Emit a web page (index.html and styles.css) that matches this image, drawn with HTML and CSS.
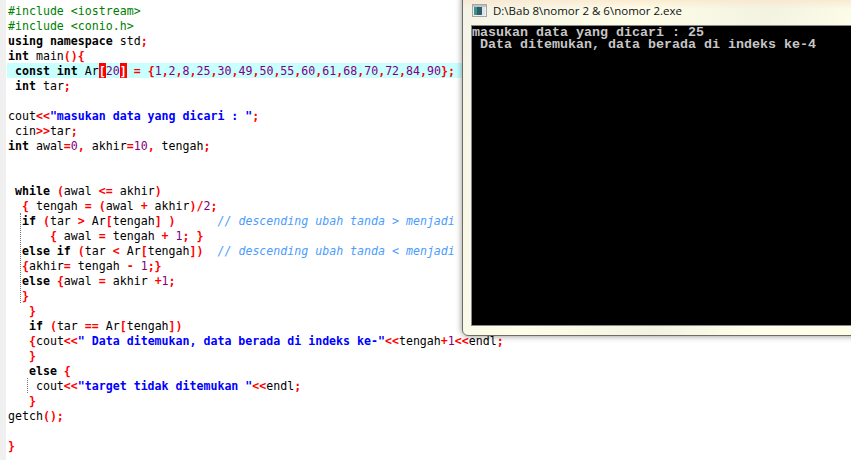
FILE: index.html
```html
<!DOCTYPE html>
<html>
<head>
<meta charset="utf-8">
<title>nomor 2</title>
<link rel="stylesheet" href="styles.css">
</head>
<body>
<main class="editor">
<div class="gutter"></div>
<pre class="code"><div class="ln"><span class="pp">#include &lt;iostream&gt;</span></div><div class="ln"><span class="pp">#include &lt;conio.h&gt;</span></div><div class="ln"><b>using namespace</b> std<i class="op">;</i></div><div class="ln"><b>int</b> main<i class="op">(){</i></div><div class="ln active"> <b>const int</b> Ar<i class="match">[</i><span class="num">20</span><i class="match">]</i> <i class="op">=</i> <i class="op">{</i><span class="num">1</span><i class="op">,</i><span class="num">2</span><i class="op">,</i><span class="num">8</span><i class="op">,</i><span class="num">25</span><i class="op">,</i><span class="num">30</span><i class="op">,</i><span class="num">49</span><i class="op">,</i><span class="num">50</span><i class="op">,</i><span class="num">55</span><i class="op">,</i><span class="num">60</span><i class="op">,</i><span class="num">61</span><i class="op">,</i><span class="num">68</span><i class="op">,</i><span class="num">70</span><i class="op">,</i><span class="num">72</span><i class="op">,</i><span class="num">84</span><i class="op">,</i><span class="num">90</span><i class="op">};</i></div><div class="ln"> <b>int</b> tar<i class="op">;</i></div><div class="ln"> </div><div class="ln">cout<i class="op">&lt;&lt;</i><span class="str">"masukan data yang dicari : "</span><i class="op">;</i></div><div class="ln"> cin<i class="op">&gt;&gt;</i>tar<i class="op">;</i></div><div class="ln"><b>int</b> awal<i class="op">=</i><span class="num">0</span><i class="op">,</i> akhir<i class="op">=</i><span class="num">10</span><i class="op">,</i> tengah<i class="op">;</i></div><div class="ln"> </div><div class="ln"> </div><div class="ln"> <b>while</b> <i class="op">(</i>awal <i class="op">&lt;=</i> akhir<i class="op">)</i></div><div class="ln">  <i class="op">{</i> tengah <i class="op">=</i> <i class="op">(</i>awal <i class="op">+</i> akhir<i class="op">)/</i><span class="num">2</span><i class="op">;</i></div><div class="guide guide-a"><div class="ln">  <b>if</b> <i class="op">(</i>tar <i class="op">&gt;</i> Ar<i class="op">[</i>tengah<i class="op">]</i> <i class="op">)</i>      <em class="cm">// descending ubah tanda &gt; menjadi &lt;</em></div><div class="ln">      <i class="op">{</i> awal <i class="op">=</i> tengah <i class="op">+</i> <span class="num">1</span><i class="op">;</i> <i class="op">}</i></div><div class="ln">  <b>else if</b> <i class="op">(</i>tar <i class="op">&lt;</i> Ar<i class="op">[</i>tengah<i class="op">])</i>  <em class="cm">// descending ubah tanda &lt; menjadi &gt;</em></div><div class="ln">  <i class="op">{</i>akhir<i class="op">=</i> tengah <i class="op">-</i> <span class="num">1</span><i class="op">;}</i></div><div class="ln">  <b>else</b> <i class="op">{</i>awal <i class="op">=</i> akhir <i class="op">+</i><span class="num">1</span><i class="op">;</i></div><div class="ln">  <i class="op">}</i></div></div><div class="ln">   <i class="op">}</i></div><div class="ln">   <b>if</b> <i class="op">(</i>tar <i class="op">==</i> Ar<i class="op">[</i>tengah<i class="op">])</i></div><div class="ln">   <i class="op">{</i>cout<i class="op">&lt;&lt;</i><span class="str">" Data ditemukan, data berada di indeks ke-"</span><i class="op">&lt;&lt;</i>tengah<i class="op">+</i><span class="num">1</span><i class="op">&lt;&lt;</i>endl<i class="op">;</i></div><div class="ln">   <i class="op">}</i></div><div class="ln">   <b>else</b> <i class="op">{</i></div><div class="guide guide-b"><div class="ln">    cout<i class="op">&lt;&lt;</i><span class="str">"target tidak ditemukan "</span><i class="op">&lt;&lt;</i>endl<i class="op">;</i></div></div><div class="ln">   <i class="op">}</i></div><div class="ln">getch<i class="op">();</i></div><div class="ln"> </div><div class="ln"><i class="op">}</i></div></pre>
</main>
<section class="console">
<header class="titlebar">
<svg class="app-icon" width="15" height="13" viewBox="0 0 15 13"><rect x="0.5" y="0.5" width="14" height="12" fill="#eef0f0" stroke="#a5a5a5"/><rect x="1" y="1" width="13" height="2" fill="#b9c4cc"/><rect x="2" y="3" width="8" height="8" fill="#2f5f66"/><rect x="2" y="3" width="3" height="8" fill="#3f8f8a"/><rect x="10" y="3" width="3" height="8" fill="#dfe3e6"/></svg>
<span class="title">D:\Bab 8\nomor 2 &amp; 6\nomor 2.exe</span>
</header>
<pre class="screen">masukan data yang dicari : 25
 Data ditemukan, data berada di indeks ke-4</pre>
</section>
</body>
</html>
```
FILE: styles.css
```css
html, body {
  margin: 0;
  height: 100%;
  overflow: hidden;
  background: #fff;
}
body {
  width: 851px;
  height: 460px;
  position: relative;
}
.editor {
  display: flex;
  height: 460px;
  background: #fff;
}
.gutter {
  width: 6px;
  flex: none;
  background: #f0f0f0;
}
.code {
  margin: 0;
  padding: 3px 0 0 2px;
  flex: 1;
  font-family: "DejaVu Sans Mono", monospace;
  font-size: 11.6px;
  color: #000;
}
.ln {
  height: 15px;
  line-height: 17px;
  white-space: pre;
}
.code b { font-weight: 700; }
.code i { font-style: normal; }
.op { color: #f00; font-weight: 700; }
.pp { color: #008000; }
.num { color: #800080; }
.str { color: #00f; font-weight: 700; }
.cm { color: #4a9cff; font-style: italic; }
.active { background: #c8ffff; margin-left: -1px; padding-left: 1px; }
.code .match {
  display: inline-block;
  height: 15px;
  background: #f00;
  color: #fff;
  font-weight: 700;
}
.guide { position: relative; }
.guide::before {
  content: "";
  position: absolute;
  top: 0;
  bottom: 0;
  border-left: 1px dotted #777;
}
.guide-a::before { left: 12px; }
.guide-b::before { left: 19px; }
.console {
  position: absolute;
  left: 462px;
  top: -6px;
  width: 400px;
  height: 342px;
  box-sizing: border-box;
  border: 1px solid #6d6d66;
  border-radius: 0 0 0 6px;
  background:
    linear-gradient(180deg, rgba(250,225,195,.55) 6px, rgba(250,235,210,0) 14px),
    linear-gradient(110deg, #f4f3e6, #fdfde9 35%, #f3f3e2 60%, #fefeea 80%, #fdfde8);
  box-shadow: 0 0 6px rgba(0,0,0,.45);
  padding: 6px 0 0 8px;
  display: flex;
  flex-direction: column;
}
.titlebar {
  height: 24px;
  flex: none;
  display: flex;
  align-items: center;
  gap: 6px;
  padding: 0 0 6px 1px;
  box-sizing: border-box;
}
.title {
  font-family: "Open Sans", "Liberation Sans", sans-serif;
  font-size: 11.5px;
  color: #111;
}
.screen {
  margin: 0 0 9px;
  flex: 1;
  background: #000;
  color: #c6c6c6;
  font-family: "Liberation Mono", monospace;
  font-weight: 700;
  font-size: 13.33px;
  line-height: 12px;
  padding: 1px 0 0;
  border: 1px solid #8a8a8a;
  border-width: 1px 0 1px 1px;
}
```
